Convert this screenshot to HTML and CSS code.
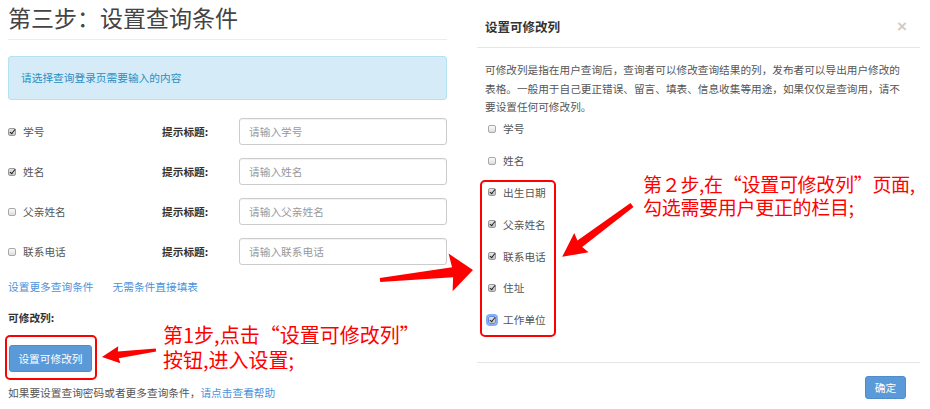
FILE: index.html
```html
<!DOCTYPE html>
<html lang="zh-CN">
<head>
<meta charset="utf-8">
<title>设置查询条件</title>
<link rel="stylesheet" href="styles.css">
</head>
<body>
<div class="page">
  <section class="left">
    <h1 class="title">第三步：设置查询条件</h1>
    <div class="rule"></div>
    <div class="alert">请选择查询登录页需要输入的内容</div>
    <div class="fields">
      <div class="field">
        <label class="check"><span class="cb on"></span>学号</label>
        <span class="hint">提示标题:</span>
        <input class="input" type="text" placeholder="请输入学号">
      </div>
      <div class="field">
        <label class="check"><span class="cb on"></span>姓名</label>
        <span class="hint">提示标题:</span>
        <input class="input" type="text" placeholder="请输入姓名">
      </div>
      <div class="field">
        <label class="check"><span class="cb"></span>父亲姓名</label>
        <span class="hint">提示标题:</span>
        <input class="input" type="text" placeholder="请输入父亲姓名">
      </div>
      <div class="field">
        <label class="check"><span class="cb"></span>联系电话</label>
        <span class="hint">提示标题:</span>
        <input class="input" type="text" placeholder="请输入联系电话">
      </div>
    </div>
    <div class="links"><a class="link">设置更多查询条件</a><a class="link">无需条件直接填表</a></div>
    <div class="sub">可修改列:</div>
    <button class="btn btn-set" type="button">设置可修改列</button>
    <p class="foot">如果要设置查询密码或者更多查询条件，<a class="link">请点击查看帮助</a></p>
  </section>

  <section class="modal">
    <header class="modal-head">
      <h2 class="modal-title">设置可修改列</h2>
      <span class="close">×</span>
    </header>
    <div class="modal-body">
      <p class="desc">可修改列是指在用户查询后，查询者可以修改查询结果的列，发布者可以导出用户修改的<br>表格。一般用于自己更正错误、留言、填表、信息收集等用途，如果仅仅是查询用，请不<br>要设置任何可修改列。</p>
      <ul class="cols">
        <li class="col"><span class="cb"></span>学号</li>
        <li class="col"><span class="cb"></span>姓名</li>
        <li class="col"><span class="cb on"></span>出生日期</li>
        <li class="col"><span class="cb on"></span>父亲姓名</li>
        <li class="col"><span class="cb on"></span>联系电话</li>
        <li class="col"><span class="cb on"></span>住址</li>
        <li class="col"><span class="cb on focus"></span>工作单位</li>
      </ul>
    </div>
    <footer class="modal-foot"><button class="btn btn-ok" type="button">确定</button></footer>
  </section>
</div>

<div class="note note1">第1步,点击“设置可修改列”<br>按钮,进入设置;</div>
<div class="note note2">第２步,在“设置可修改列”页面,<br>勾选需要用户更正的栏目;</div>

<svg class="overlay" width="930" height="409" viewBox="0 0 930 409" xmlns="http://www.w3.org/2000/svg">
  <rect x="6" y="336" width="90" height="43" rx="4" fill="none" stroke="#ff0000" stroke-width="2"/>
  <rect x="481" y="181" width="74" height="155" rx="4" fill="none" stroke="#ff0000" stroke-width="2"/>
  <polygon fill="#ff0000" transform="translate(156,350) rotate(172.6)" points="0,-1.5 38,-3.5 37,-8.5 54.5,0 37,8.5 38,3.5 0,1.5"/>
  <polygon fill="#ff0000" transform="translate(380,280) rotate(-6.1)" points="0,-2 73,-5 71,-19 93.5,0 71,19 73,5 0,2"/>
  <polygon fill="#ff0000" transform="translate(632,205) rotate(143.4)" points="0,-2.5 65,-4 63,-12 87,0 63,12 65,4 0,2.5"/>
</svg>
</body>
</html>
```

FILE: styles.css
```css
* { box-sizing: border-box; }

html, body {
  margin: 0;
  padding: 0;
  background: #ffffff;
}

body {
  position: relative;
  width: 930px;
  height: 409px;
  overflow: hidden;
  font-family: "Noto Sans CJK SC", "Noto Sans", sans-serif;
  font-size: 10.7px;
  color: #555555;
}

.page {
  display: flex;
  align-items: flex-start;
}

/* ---------- left panel ---------- */
.left {
  width: 439px;
  margin-left: 8px;
  display: flex;
  flex-direction: column;
  align-items: flex-start;
}

.title {
  margin: 0;
  padding-top: 2px;
  font-size: 23px;
  line-height: 30px;
  font-weight: 400;
  color: #444444;
}

.rule {
  align-self: stretch;
  margin-top: 7px;
  border-top: 1px solid #ececec;
}

.alert {
  align-self: stretch;
  margin-top: 16px;
  height: 44px;
  line-height: 42px;
  padding-left: 12px;
  background: #d5ecf8;
  border: 1px solid #b6e1f3;
  border-radius: 3px;
  color: #2b8ec2;
}

.fields {
  align-self: stretch;
  margin-top: 18px;
  display: flex;
  flex-direction: column;
  gap: 13px;
}

.field {
  display: grid;
  grid-template-columns: 154px 77px 208px;
  align-items: center;
  height: 27px;
}

.check {
  display: flex;
  align-items: center;
  color: #555555;
}

.hint {
  font-weight: 700;
  color: #333333;
}

.input {
  width: 208px;
  height: 27px;
  margin: 0;
  padding: 0 9px;
  border: 1px solid #cccccc;
  border-radius: 3px;
  box-shadow: inset 0 1px 1px rgba(0, 0, 0, 0.06);
  font-family: inherit;
  font-size: 10.7px;
  color: #555555;
  background: #ffffff;
  outline: none;
}

.input::placeholder {
  color: #999999;
}

.cb {
  position: relative;
  flex: none;
  display: inline-block;
  width: 8px;
  height: 8px;
  margin-right: 7px;
  border: 1px solid #a8a8a8;
  border-radius: 2px;
  background: linear-gradient(#fbfbfb, #dddddd);
}

.cb.on {
  background: linear-gradient(#e4e4e4, #c4c4c4);
  border-color: #9a9a9a;
}

.cb.on::after {
  content: "";
  position: absolute;
  left: 2px;
  top: -1px;
  width: 2px;
  height: 5px;
  border-right: 1.5px solid #1e1e1e;
  border-bottom: 1.5px solid #1e1e1e;
  transform: rotate(38deg);
}

.cb.focus {
  border-color: #5a8ee8;
  box-shadow: 0 0 0 2px #86adf2;
}

.links {
  margin-top: 12px;
  line-height: 20px;
  display: flex;
  gap: 19px;
}

.link {
  color: #4b92dc;
  text-decoration: none;
}

.sub {
  margin-top: 11px;
  line-height: 20px;
  font-weight: 700;
  color: #333333;
}

.btn {
  font-family: inherit;
  font-size: 10.7px;
  color: #ffffff;
  background: #5b9ad9;
  border: 1px solid #4f8ccb;
  border-radius: 3px;
  padding: 0;
  cursor: pointer;
}

.btn-set {
  margin-top: 17px;
  margin-left: 1px;
  width: 83px;
  height: 27px;
}

.foot {
  margin: 11px 0 0;
  line-height: 20px;
  color: #555555;
}

/* ---------- modal ---------- */
.modal {
  width: 443px;
  margin-left: 30px;
  display: flex;
  flex-direction: column;
}

.modal-head {
  height: 48px;
  padding: 17px 13px 0 8px;
  display: flex;
  justify-content: space-between;
  align-items: flex-start;
  border-bottom: 1px solid #e6e6e6;
}

.modal-title {
  margin: 0;
  font-size: 12.5px;
  line-height: 20px;
  font-weight: 700;
  color: #333333;
}

.close {
  font-family: "Liberation Sans", sans-serif;
  font-size: 17px;
  line-height: 20px;
  font-weight: 700;
  color: #cccccc;
}

.modal-body {
  height: 314px;
  padding: 13px 15px 0 8px;
}

.desc {
  margin: 0;
  line-height: 18.5px;
  white-space: nowrap;
  font-size: 10.65px;
  color: #555555;
}

.cols {
  list-style: none;
  margin: -3.5px 0 0;
  padding: 0 0 0 3px;
}

.col {
  height: 31.8px;
  display: flex;
  align-items: center;
  color: #555555;
}

.modal-foot {
  height: 47px;
  border-top: 1px solid #e6e6e6;
  padding: 13px 14px 0 0;
  display: flex;
  justify-content: flex-end;
  align-items: flex-start;
}

.btn-ok {
  width: 41px;
  height: 23px;
}

/* ---------- annotations ---------- */
.note {
  position: absolute;
  font-family: "Noto Sans CJK SC", sans-serif;
  color: #ff0000;
  white-space: nowrap;
}

.note1 {
  left: 163px;
  top: 322px;
  font-size: 20px;
  line-height: 25px;
}

.note2 {
  left: 643px;
  top: 172px;
  font-size: 19px;
  line-height: 23px;
  letter-spacing: -0.3px;
}

.overlay {
  position: absolute;
  left: 0;
  top: 0;
  pointer-events: none;
}
```
